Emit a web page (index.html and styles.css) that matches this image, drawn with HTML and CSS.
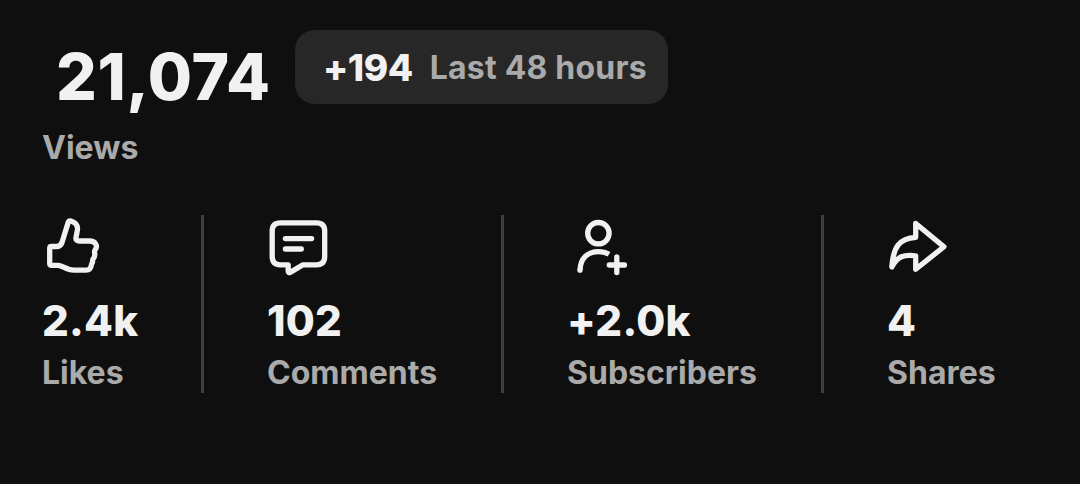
FILE: index.html
```html
<!DOCTYPE html>
<html lang="en">
<head>
    <meta charset="UTF-8">
    <meta name="viewport" content="width=device-width, initial-scale=1.0">
    <title>Video stats</title>
    <link rel="stylesheet" href="styles.css">
</head>
<body>
    <main class="card">
        <header class="summary">
            <h1>21,074</h1>
            <div class="badge">
                <strong>+194</strong>
                <span>Last 48 hours</span>
            </div>
        </header>
        <p class="label views">Views</p>

        <section class="stats">
            <div class="stat">
                <svg class="icon" viewBox="42 215 62 62">
                    <path d="M49.7 248.3Q49.7 246.5 51.5 246.5H56.5Q60.6 246.5 62 242.5L68.2 222.4Q68.9 220.2 71 221Q78.4 223.5 77.4 230L76 237.5Q75.4 241 79 241H89.5C95.5 241 98 246 95.3 249.5Q94 251.3 94.8 254Q95 257 92.8 259.5Q92.8 262.5 91.5 264.5Q90.8 270.2 86 270.2H74C66 270.2 62.5 265.3 58 265.3H51.5Q49.7 265.3 49.7 263.5Z"/>
                </svg>
                <strong class="value">2.4k</strong>
                <span class="label">Likes</span>
            </div>
            <div class="stat">
                <svg class="icon" viewBox="267 215 62 62">
                    <path d="M280.3 222.8H316.5Q324.7 222.8 324.7 231V256.6Q324.7 264.8 316.5 264.8H303L290.2 272.4Q288.2 273.4 288.2 271.2V264.8H280.3Q272.2 264.8 272.2 256.6V231Q272.2 222.8 280.3 222.8Z"/>
                    <path d="M285.4 238.6H311.6M285.4 249H301.3"/>
                </svg>
                <strong class="value">102</strong>
                <span class="label">Comments</span>
            </div>
            <div class="stat">
                <svg class="icon" viewBox="567 215 62 62">
                    <circle cx="598.4" cy="233.2" r="10.7"/>
                    <path class="butt" d="M580 270C580.5 258.5 587.5 251.6 598.4 251.6Q604.5 251.6 609 254.3"/>
                    <path d="M580 270.2V270.1M609.3 265H624.5M616.8 257V272.6"/>
                </svg>
                <strong class="value">+2.0k</strong>
                <span class="label">Subscribers</span>
            </div>
            <div class="stat">
                <svg class="icon" viewBox="887 215 62 62">
                    <path d="M915.7 223.5L943.9 246.7L915.7 269.3V255.8C904 254.5 897.5 256 891.8 267C893.3 246.5 899.5 238.3 915.7 237.3Z"/>
                </svg>
                <strong class="value">4</strong>
                <span class="label">Shares</span>
            </div>
        </section>
    </main>
</body>
</html>
```

FILE: styles.css
```css
* {
    box-sizing: border-box;
}

body {
    margin: 0;
    background: #0f0f0f;
    color: #f1f1f1;
    font-family: Inter, sans-serif;
}

.card {
    height: 484px;
    padding: 30px 0 0 42px;
}

.summary {
    display: flex;
    height: 98px;
    padding-left: 14px;
}

h1 {
    width: 239px;
    margin: 8px 0 0;
    font-size: 64px;
    line-height: 78px;
    font-weight: 800;
    letter-spacing: 0.7px;
}

.badge {
    display: flex;
    align-items: flex-start;
    gap: 17px;
    width: 373px;
    height: 74px;
    padding: 15px 0 0 28px;
    border-radius: 20px;
    background: #272727;
    white-space: nowrap;
}

.badge strong {
    font-size: 37px;
    line-height: 46px;
    font-weight: 800;
    letter-spacing: -0.5px;
}

.badge span {
    color: #aaa;
    font-size: 32px;
    line-height: 46px;
    font-weight: 700;
    letter-spacing: 0.22px;
}

.label {
    color: #aaa;
    font-size: 32px;
    line-height: 40px;
    font-weight: 700;
}

.views {
    margin: 0;
    height: 87px;
}

.stats {
    display: grid;
    grid-template-columns: 159px 300px 320px 259px;
    height: 178px;
}

.stat {
    display: flex;
    flex-direction: column;
    border-left: 3px solid #3f3f3f;
    padding-left: 63px;
}

.stat:first-child {
    border-left: 0;
    padding-left: 0;
}

.icon {
    width: 62px;
    height: 62px;
    overflow: visible;
    fill: none;
    stroke: #f1f1f1;
    stroke-width: 5.3;
    stroke-linecap: round;
    stroke-linejoin: round;
}

.icon .butt {
    stroke-linecap: butt;
}

.value {
    margin: 18px 0 6px;
    font-size: 42px;
    line-height: 52px;
    font-weight: 800;
    letter-spacing: 0.25px;
}
```
